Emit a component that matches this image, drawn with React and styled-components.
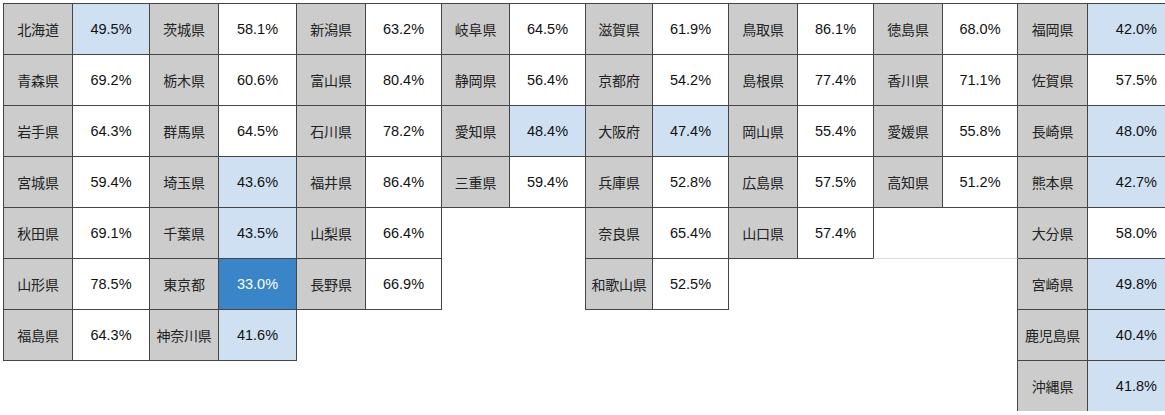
import React from "react";
import styled, { createGlobalStyle, css } from "styled-components";

const Global = createGlobalStyle`
  html, body { margin: 0; padding: 0; overflow: hidden; background: #ffffff; }
  body { font-family: "Liberation Sans", "Noto Sans CJK JP", sans-serif; }
`;

const COLS = [69, 77, 69, 78, 69, 76, 68, 76, 67, 76, 69, 76, 69, 75, 70, 79];

const Page = styled.div`
  padding: 3px 0 0 3px;
`;

const Grid = styled.div`
  display: grid;
  grid-template-columns: ${COLS.map((w) => `${w}px`).join(" ")};
  grid-auto-rows: 51px;
  grid-template-rows: repeat(8, 51px);
  width: max-content;
`;

const cellBase = css`
  grid-row: ${(p) => p.$row} / span 1;
  grid-column: ${(p) => p.$col} / span ${(p) => p.$span || 1};
  margin: 0 -1px -1px 0;
  border: 1px solid #454545;
  display: flex;
  align-items: center;
  box-sizing: border-box;
`;

const NameCell = styled.div`
  ${cellBase};
  justify-content: center;
  background: #cccccc;
  color: #222222;
  font-family: "Noto Sans CJK JP", sans-serif;
  font-size: 14px;
  letter-spacing: -0.2px;
  white-space: nowrap;
`;

const levelColors = {
  normal: { bg: "#ffffff", fg: "#111111" },
  low: { bg: "#cfe0f3", fg: "#111111" },
  lowest: { bg: "#3a84c8", fg: "#ffffff" },
};

const ValueCell = styled.div`
  ${cellBase};
  justify-content: ${(p) => (p.$right ? "flex-end" : "center")};
  padding-right: ${(p) => (p.$right ? "9px" : "0")};
  background: ${(p) => levelColors[p.$level].bg};
  color: ${(p) => levelColors[p.$level].fg};
  font-family: "Liberation Sans", sans-serif;
  font-size: 14.5px;
`;

const EmptyCell = styled.div`
  ${cellBase};
  border-bottom-color: #dddddd;
  background: #ffffff;
`;

const REGIONS = [
  [["北海道", 49.5], ["青森県", 69.2], ["岩手県", 64.3], ["宮城県", 59.4], ["秋田県", 69.1], ["山形県", 78.5], ["福島県", 64.3]],
  [["茨城県", 58.1], ["栃木県", 60.6], ["群馬県", 64.5], ["埼玉県", 43.6], ["千葉県", 43.5], ["東京都", 33.0], ["神奈川県", 41.6]],
  [["新潟県", 63.2], ["富山県", 80.4], ["石川県", 78.2], ["福井県", 86.4], ["山梨県", 66.4], ["長野県", 66.9]],
  [["岐阜県", 64.5], ["静岡県", 56.4], ["愛知県", 48.4], ["三重県", 59.4]],
  [["滋賀県", 61.9], ["京都府", 54.2], ["大阪府", 47.4], ["兵庫県", 52.8], ["奈良県", 65.4], ["和歌山県", 52.5]],
  [["鳥取県", 86.1], ["島根県", 77.4], ["岡山県", 55.4], ["広島県", 57.5], ["山口県", 57.4]],
  [["徳島県", 68.0], ["香川県", 71.1], ["愛媛県", 55.8], ["高知県", 51.2]],
  [["福岡県", 42.0], ["佐賀県", 57.5], ["長崎県", 48.0], ["熊本県", 42.7], ["大分県", 58.0], ["宮崎県", 49.8], ["鹿児島県", 40.4], ["沖縄県", 41.8]],
];

const levelOf = (v) => (v < 40 ? "lowest" : v < 50 ? "low" : "normal");

export default function App() {
  return (
    <Page>
      <Global />
      <Grid>
        {REGIONS.map((items, g) =>
          items.map(([name, v], r) => (
            <React.Fragment key={name}>
              <NameCell $row={r + 1} $col={g * 2 + 1}>{name}</NameCell>
              <ValueCell
                $row={r + 1}
                $col={g * 2 + 2}
                $level={levelOf(v)}
                $right={g === REGIONS.length - 1}
              >
                {v.toFixed(1)}%
              </ValueCell>
            </React.Fragment>
          ))
        )}
        <EmptyCell $row={5} $col={13} $span={2} />
      </Grid>
    </Page>
  );
}
